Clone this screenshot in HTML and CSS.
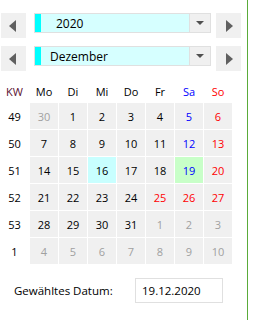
FILE: index.html
```html
<!DOCTYPE html>
<html lang="de">
<head>
  <meta charset="UTF-8">
  <title>Kalender</title>
  <link rel="stylesheet" href="styles.css">
</head>
<body>
  <div class="panel">
    <div class="nav">
      <div class="nav-row">
        <button class="arrow-btn"><span class="tri-left"></span></button>
        <div class="combo">
          <span class="combo-mark"></span>
          <span class="combo-text year">2020</span>
          <span class="combo-drop"><span class="tri-down"></span></span>
        </div>
        <button class="arrow-btn"><span class="tri-right"></span></button>
      </div>
      <div class="nav-row">
        <button class="arrow-btn"><span class="tri-left"></span></button>
        <div class="combo">
          <span class="combo-mark"></span>
          <span class="combo-text month">Dezember</span>
          <span class="combo-drop"><span class="tri-down"></span></span>
        </div>
        <button class="arrow-btn"><span class="tri-right"></span></button>
      </div>
    </div>

    <div class="calendar" id="calendar">
      <div class="head kw">KW</div>
      <div class="head">Mo</div>
      <div class="head">Di</div>
      <div class="head">Mi</div>
      <div class="head">Do</div>
      <div class="head">Fr</div>
      <div class="head sat">Sa</div>
      <div class="head sun">So</div>
    </div>

    <div class="selected">
      <span class="selected-label">Gewähltes Datum:</span>
      <span class="selected-box">19.12.2020</span>
    </div>
  </div>

  <script>
    // Wochen: KW, dann Tage Mo..So. o = anderer Monat, s = Sa, r = So/Feiertag
    const wochen = [
      [49, ['30o', '1', '2', '3', '4', '5s', '6r']],
      [50, ['7', '8', '9', '10', '11', '12s', '13r']],
      [51, ['14', '15', '16t', '17', '18', '19g', '20r']],
      [52, ['21', '22', '23', '24', '25r', '26r', '27r']],
      [53, ['28', '29', '30', '31', '1o', '2o', '3o']],
      [1, ['4o', '5o', '6o', '7o', '8o', '9o', '10o']]
    ];
    const cal = document.getElementById('calendar');

    wochen.forEach(([kw, tage]) => {
      const k = document.createElement('div');
      k.className = 'week';
      k.textContent = kw;
      cal.appendChild(k);
      tage.forEach(t => {
        const d = document.createElement('div');
        d.className = 'day';
        const flag = t.replace(/[0-9]/g, '');
        if (flag === 'o') d.classList.add('other');
        if (flag === 's') d.classList.add('sat');
        if (flag === 'r') d.classList.add('sun');
        if (flag === 't') d.classList.add('today');
        if (flag === 'g') d.classList.add('picked', 'sat');
        d.textContent = parseInt(t, 10);
        cal.appendChild(d);
      });
    });
  </script>
</body>
</html>
```

FILE: styles.css
```css
body {
  margin: 0;
  font-family: "Open Sans", Arial, sans-serif;
  font-size: 11px;
  color: #000;
  background: #fff;
}
.panel {
  width: 248px;
  height: 320px;
  border-right: 1px solid #5aab3a;
  box-sizing: border-box;
}
.nav {
  padding-top: 13px;
  display: flex;
  flex-direction: column;
  gap: 8px;
}
.nav-row {
  display: flex;
  align-items: flex-start;
  height: 25px;
  padding-left: 1px;
}
.arrow-btn {
  width: 25px;
  height: 25px;
  padding: 0;
  border: none;
  background: #f0f0f0;
  display: flex;
  align-items: center;
  justify-content: center;
}
.tri-left {
  width: 0;
  height: 0;
  margin-right: 2px;
  border-top: 6px solid transparent;
  border-bottom: 6px solid transparent;
  border-right: 7px solid #606060;
}
.tri-right {
  width: 0;
  height: 0;
  margin-left: 2px;
  border-top: 6px solid transparent;
  border-bottom: 6px solid transparent;
  border-left: 7px solid #606060;
}
.combo {
  margin-left: 8px;
  margin-right: 5px;
  width: 177px;
  height: 20px;
  box-sizing: border-box;
  border: 1px solid #e0e0e0;
  background: #d6ffff;
  display: flex;
  align-items: stretch;
}
.combo-mark {
  width: 6px;
  background: #00ffff;
}
.combo-text {
  flex: 1;
  display: flex;
  align-items: center;
  font-size: 12px;
}
.combo-text.year {
  padding-left: 15px;
}
.combo-text.month {
  padding-left: 9px;
}
.combo-drop {
  width: 20px;
  background: #f0f0f0;
  border-left: 1px solid #e0e0e0;
  display: flex;
  align-items: center;
  justify-content: center;
}
.tri-down {
  width: 0;
  height: 0;
  border-left: 4px solid transparent;
  border-right: 4px solid transparent;
  border-top: 4px solid #505050;
}
.calendar {
  margin-top: 9px;
  display: grid;
  grid-template-columns: 29px repeat(7, 28px);
  grid-template-rows: 22px repeat(6, 26px);
  gap: 1px;
}
.head, .week, .day {
  display: flex;
  align-items: center;
  justify-content: center;
}
.head.kw {
  color: #5a1030;
}
.day {
  background: #f0f0f0;
}
.sat {
  color: #0000ff;
}
.sun {
  color: #ff0000;
}
.other {
  color: #a0a0a0;
}
.today {
  background: #c8ffff;
}
.picked {
  background: #c8ffc8;
}
.selected {
  margin-top: 14px;
  display: flex;
  align-items: center;
  padding-left: 14px;
  font-size: 11.5px;
}
.selected-label {
  width: 121px;
}
.selected-box {
  width: 88px;
  height: 25px;
  box-sizing: border-box;
  border: 1px solid #e0e0e0;
  padding-left: 6px;
  display: flex;
  align-items: center;
}
```
